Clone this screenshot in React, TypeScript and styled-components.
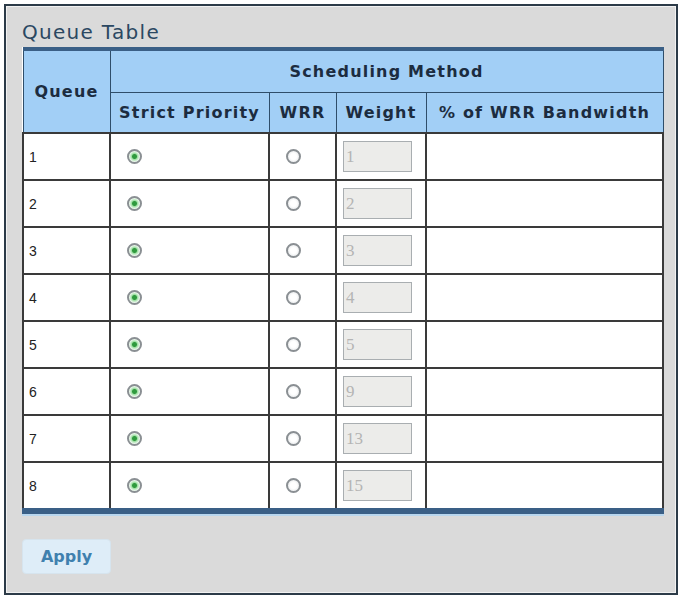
import styled, { createGlobalStyle } from 'styled-components';

const GlobalStyle = createGlobalStyle`
  html, body {
    margin: 0;
    padding: 0;
    background: #ffffff;
  }
`

const Frame = styled.div`
  box-sizing: border-box;
  margin: 4px 0 0 4px;
  width: 674px;
  height: 591px;
  border: 2px solid #2c3b48;
  box-shadow: inset 0 0 0 1px #f2f2f2;
  background: #dadada;
  padding: 14px 0 0 16px;
`

const Title = styled.div`
  font-family: "DejaVu Sans", Verdana, sans-serif;
  font-size: 20px;
  letter-spacing: 1.3px;
  color: #2b4862;
  height: 27px;
  line-height: 24px;
`

const Table = styled.table`
  width: 640px;
  table-layout: fixed;
  border-collapse: collapse;
  border-top: 4px solid #3a5f86;
  border-bottom: 6px solid #3a5f86;
  box-shadow: 0 2px 0 #b8d6ee;
  background: #ffffff;
`

const HeadCell = styled.th<{ $h: number }>`
  height: ${p => p.$h}px;
  padding: 0;
  background: #a2cff6;
  border: 1px solid #2f4e6a;
  font-family: "DejaVu Sans", Verdana, sans-serif;
  font-weight: bold;
  font-size: 16px;
  letter-spacing: 1.2px;
  color: #1c2c40;
  text-align: center;
  vertical-align: middle;
  white-space: nowrap;
`

const Cell = styled.td`
  height: 45px;
  padding: 0;
  border: 2px solid #3a3a3a;
  font-family: "Liberation Sans", Arial, sans-serif;
  font-size: 14px;
  color: #222;
  vertical-align: middle;
`

const NumCell = styled(Cell)`
  padding-left: 5px;
`

const RadioCell = styled(Cell)<{ $pad: number }>`
  padding-left: ${p => p.$pad}px;
`

const Radio = styled.span<{ $on: boolean }>`
  display: block;
  box-sizing: border-box;
  width: 15px;
  height: 15px;
  border-radius: 50%;
  border: 2px solid #8a8f93;
  background: ${p => p.$on
    ? 'radial-gradient(circle, #2f9a3e 0 2px, #9fe0a4 3px, #e9f7ea 5px)'
    : 'radial-gradient(circle, #ffffff 0 3px, #e4e6e8 7px)'};
`

const WeightBox = styled.div`
  box-sizing: border-box;
  margin-left: 6px;
  width: 69px;
  height: 31px;
  border: 1px solid #a9aeb1;
  background: #ececea;
  font-family: "Liberation Serif", "Times New Roman", serif;
  font-size: 17px;
  color: #b4b4b4;
  line-height: 29px;
  padding-left: 2px;
`

const ApplyButton = styled.button`
  margin-top: 25px;
  width: 89px;
  height: 35px;
  border: 1px solid #d6e4ee;
  border-radius: 4px;
  background: #deedf8;
  font-family: "DejaVu Sans", Verdana, sans-serif;
  font-weight: bold;
  font-size: 16px;
  color: #3f80ae;
  padding: 0;
`

const weights = [1, 2, 3, 4, 5, 9, 13, 15]

export default function App() {
  return (
    <>
      <GlobalStyle />
      <Frame>
        <Title>Queue Table</Title>
        <Table>
          <colgroup>
            <col style={{ width: 87 }} />
            <col style={{ width: 159 }} />
            <col style={{ width: 67 }} />
            <col style={{ width: 90 }} />
            <col style={{ width: 237 }} />
          </colgroup>
          <thead>
            <tr>
              <HeadCell $h={41} rowSpan={2}>Queue</HeadCell>
              <HeadCell $h={41} colSpan={4}>Scheduling Method</HeadCell>
            </tr>
            <tr>
              <HeadCell $h={39}>Strict Priority</HeadCell>
              <HeadCell $h={39}>WRR</HeadCell>
              <HeadCell $h={39}>Weight</HeadCell>
              <HeadCell $h={39}>% of WRR Bandwidth</HeadCell>
            </tr>
          </thead>
          <tbody>
            {weights.map((w, i) => (
              <tr key={i}>
                <NumCell>{i + 1}</NumCell>
                <RadioCell $pad={16}><Radio $on /></RadioCell>
                <RadioCell $pad={16}><Radio $on={false} /></RadioCell>
                <Cell><WeightBox>{w}</WeightBox></Cell>
                <Cell />
              </tr>
            ))}
          </tbody>
        </Table>
        <ApplyButton>Apply</ApplyButton>
      </Frame>
    </>
  )
}
